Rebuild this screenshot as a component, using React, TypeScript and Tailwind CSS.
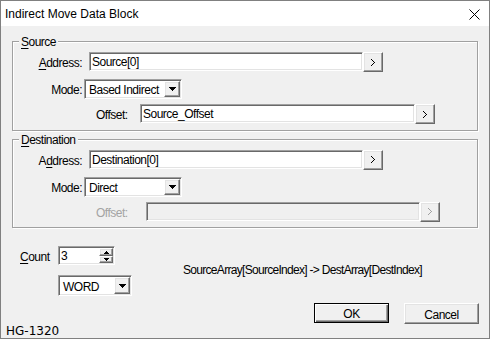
import type { ReactNode } from 'react';

const sunken =
  'border border-t-[#a0a0a0] border-l-[#a0a0a0] border-r-white border-b-white shadow-[inset_1px_1px_0_#696969,inset_-1px_-1px_0_#e3e3e3]';
const raised =
  'border border-t-white border-l-white border-r-[#696969] border-b-[#696969] shadow-[inset_-1px_-1px_0_#a0a0a0,inset_1px_1px_0_#e3e3e3] bg-[#f0f0f0]';

const Chevron = ({ disabled }: { disabled?: boolean }) => (
  <svg width="4" height="7" viewBox="0 0 4 7" shapeRendering="crispEdges" fill={disabled ? '#a0a0a0' : '#000'}>
    <rect x="0" y="0" width="1" height="1" />
    <rect x="1" y="1" width="1" height="1" />
    <rect x="2" y="2" width="1" height="1" />
    <rect x="3" y="3" width="1" height="1" />
    <rect x="2" y="4" width="1" height="1" />
    <rect x="1" y="5" width="1" height="1" />
    <rect x="0" y="6" width="1" height="1" />
  </svg>
);

const DownTri = () => (
  <svg width="7" height="4" viewBox="0 0 7 4" shapeRendering="crispEdges" fill="#000">
    <rect x="0" y="0" width="7" height="1" />
    <rect x="1" y="1" width="5" height="1" />
    <rect x="2" y="2" width="3" height="1" />
    <rect x="3" y="3" width="1" height="1" />
  </svg>
);

const SpinTri = ({ up }: { up?: boolean }) => (
  <svg width="5" height="3" viewBox="0 0 5 3" shapeRendering="crispEdges" fill="#000" className={up ? '' : 'rotate-180'}>
    <rect x="2" y="0" width="1" height="1" />
    <rect x="1" y="1" width="3" height="1" />
    <rect x="0" y="2" width="5" height="1" />
  </svg>
);

const BrowseBtn = ({ disabled }: { disabled?: boolean }) => (
  <div className={`${raised} w-[20px] h-[20px] flex items-center justify-center shrink-0`}>
    <Chevron disabled={disabled} />
  </div>
);

const Select = ({ value, className }: { value: string; className: string }) => (
  <div className={`${sunken} ${className} bg-white flex items-center p-[1px] box-border`}>
    <span className="flex-1 pl-[3px] pt-[2px] leading-none whitespace-nowrap">{value}</span>
    <div className={`${raised} w-[16px] h-full flex items-center justify-center`}>
      <DownTri />
    </div>
  </div>
);

const Group = ({ legend, children, className }: { legend: ReactNode; children: ReactNode; className: string }) => (
  <div
    className={`relative ml-[11px] w-[466px] h-[90px] border border-[#a0a0a0] shadow-[inset_1px_1px_0_#fff,1px_1px_0_#fff] ${className}`}
  >
    <span className="absolute left-[6px] -top-[8px] bg-[#f0f0f0] px-[2px] leading-[16px]">{legend}</span>
    {children}
  </div>
);

const AddressRow = ({ label, value }: { label: ReactNode; value: string }) => (
  <div className="flex items-start h-[20px] mt-[10px]">
    <div className="w-[69px] h-[20px] text-right leading-[22px]">{label}</div>
    <div className={`${sunken} ml-[7px] w-[274px] h-[19px] bg-white pl-[2px] leading-[19px]`}>{value}</div>
    <BrowseBtn />
  </div>
);

const ModeRow = ({ value }: { value: string }) => (
  <div className="flex items-start h-[20px] mt-[7px]">
    <div className="w-[69px] h-[20px] text-right leading-[22px]">Mode:</div>
    <Select value={value} className="ml-[2px] w-[98px] h-[20px]" />
  </div>
);

export default function App() {
  return (
    <div className="w-[490px] h-[339px] bg-[#f0f0f0] border border-[#808080] flex flex-col text-[12px] tracking-[-0.5px] text-black font-['Liberation_Sans',Arial,sans-serif] overflow-hidden">
      {/* title bar */}
      <div className="h-[25px] shrink-0 bg-white flex items-center justify-between pl-[4px] pr-[9px]">
        <span className="text-[12px] tracking-normal mt-[1px]">Indirect Move Data Block</span>
        <svg width="11" height="11" viewBox="0 0 11 11" className="mt-[2px]">
          <path d="M0.5 0.5 L10.5 10.5 M10.5 0.5 L0.5 10.5" stroke="#000" strokeWidth="1" />
        </svg>
      </div>

      <Group
        className="mt-[15px]"
        legend={
          <>
            <span className="underline underline-offset-2">S</span>ource
          </>
        }
      >
        <AddressRow
          label={
            <>
              <span className="underline underline-offset-2">A</span>ddress:
            </>
          }
          value="Source[0]"
        />
        <ModeRow value="Based Indirect" />
        <div className="flex items-start h-[20px] mt-[5px]">
          <div className="ml-[83px] w-[44px] h-[20px] leading-[22px]">Offset:</div>
          <div className={`${sunken} w-[275px] h-[19px] bg-white pl-[2px] leading-[19px]`}>Source_Offset</div>
          <BrowseBtn />
        </div>
      </Group>

      <Group
        className="mt-[8px]"
        legend={
          <>
            <span className="underline underline-offset-2">D</span>estination
          </>
        }
      >
        <AddressRow
          label={
            <>
              A<span className="underline underline-offset-2">d</span>dress:
            </>
          }
          value="Destination[0]"
        />
        <ModeRow value="Direct" />
        <div className="flex items-start h-[20px] mt-[5px]">
          <div className="ml-[83px] w-[50px] h-[20px] leading-[22px] text-[#a3a3a3]">Offset:</div>
          <div className={`${sunken} w-[274px] h-[19px] bg-[#f0f0f0]`} />
          <BrowseBtn disabled />
        </div>
      </Group>

      {/* count + type */}
      <div className="flex ml-[19px] mt-[18px]">
        <div className="flex flex-col">
          <div className="flex items-start h-[19px]">
            <span className="w-[38px] h-[19px] leading-[22px]">
              <span className="underline underline-offset-2">C</span>ount
            </span>
            <div className={`${sunken} w-[57px] h-[19px] bg-white flex p-[1px]`}>
              <span className="flex-1 pl-[1px] leading-[17px]">3</span>
              <div className="w-[14px] flex flex-col">
                <div className={`${raised} h-[8px] flex items-center justify-center`}>
                  <SpinTri up />
                </div>
                <div className={`${raised} h-[7px] flex items-center justify-center`}>
                  <SpinTri />
                </div>
              </div>
            </div>
          </div>
          <Select value="WORD" className="ml-[38px] mt-[10px] w-[74px] h-[21px]" />
        </div>
        <div className="ml-[51px] mt-[17px] leading-[15px] whitespace-nowrap tracking-[-0.7px]">
          SourceArray[SourceIndex] -&gt; DestArray[DestIndex]
        </div>
      </div>

      {/* buttons */}
      <div className="flex justify-end gap-[15px] pr-[10px] mt-[7px]">
        <div className="w-[75px] h-[20px] pt-[2px] border border-black bg-[#f0f0f0] shadow-[inset_1px_1px_0_#fff,inset_-1px_-1px_0_#696969,inset_-2px_-2px_0_#a0a0a0] flex items-center justify-center">
          OK
        </div>
        <div className={`${raised} w-[75px] h-[21px] pt-[2px] flex items-center justify-center`}>Cancel</div>
      </div>

      <div className="mt-auto pl-[5px] leading-[14px] text-[12px] tracking-normal font-['DejaVu_Sans',sans-serif]">
        HG-1320
      </div>
    </div>
  );
}
